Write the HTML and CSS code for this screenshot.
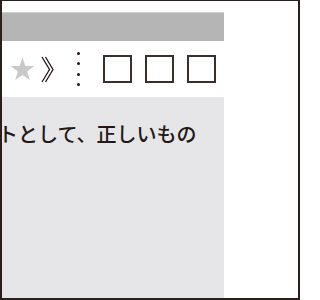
FILE: index.html
```html
<!DOCTYPE html>
<html lang="ja">
<head>
<meta charset="utf-8">
<link rel="stylesheet" href="styles.css">
</head>
<body>
<div class="frame">
  <div class="column">
    <div class="bar"></div>
    <div class="toolbar">
      <svg class="star" width="25" height="24" viewBox="0 0 25 24"><polygon points="12.5,0.5 15.4,8.9 24.3,9.1 17.2,14.5 19.8,23 12.5,18 5.2,23 7.8,14.5 0.7,9.1 9.6,8.9" fill="#c9c9c9"/></svg>
      <svg class="chev" width="13" height="27" viewBox="0 0 13 27"><polyline points="1,1 8.5,13.5 1,26" fill="none" stroke="#231815" stroke-width="1.3"/><polyline points="4.5,1 12,13.5 4.5,26" fill="none" stroke="#231815" stroke-width="1.3"/></svg>
      <div class="dots"><span class="dot"></span><span class="dot"></span><span class="dot"></span><span class="dot"></span></div>
      <div class="box box1"></div>
      <div class="box box2"></div>
      <div class="box box3"></div>
    </div>
    <div class="content">
      <p class="question">トとして、正しいもの</p>
    </div>
  </div>
</div>
</body>
</html>
```
FILE: styles.css
```css
html, body {
  margin: 0;
  padding: 0;
  background: #ffffff;
}
.frame {
  width: 300px;
  height: 300px;
  box-sizing: border-box;
  border: 2px solid #2a1f1c;
  border-top-width: 1px;
  padding-top: 11px;
  overflow: hidden;
  background: #ffffff;
}
.column {
  width: 222px;
  height: 100%;
  display: flex;
  flex-direction: column;
}
.bar {
  height: 29px;
  box-sizing: border-box;
  background: #b5b5b5;
  border-top: 1px solid #cfcfcf;
  flex: none;
}
.toolbar {
  height: 56px;
  flex: none;
  display: flex;
  align-items: center;
}
.star {
  margin-left: 8px;
  display: block;
}
.chev {
  margin-left: 6px;
  display: block;
}
.dots {
  margin-left: 23px;
  display: flex;
  flex-direction: column;
  gap: 7.6px;
}
.dot {
  width: 3px;
  height: 3px;
  border-radius: 50%;
  background: #231815;
}
.box {
  width: 29px;
  height: 28px;
  box-sizing: border-box;
  border: 2px solid #3a2f2c;
}
.box1 { margin-left: 23px; }
.box2 { margin-left: 13px; }
.box3 { margin-left: 13px; }
.content {
  flex: 1;
  background: #e6e6e8;
  overflow: hidden;
}
.question {
  margin: 27px 0 0 -4px;
  font-family: "Noto Sans CJK JP", sans-serif;
  font-size: 20px;
  line-height: 20px;
  font-weight: 500;
  color: #231815;
  white-space: nowrap;
}
```
